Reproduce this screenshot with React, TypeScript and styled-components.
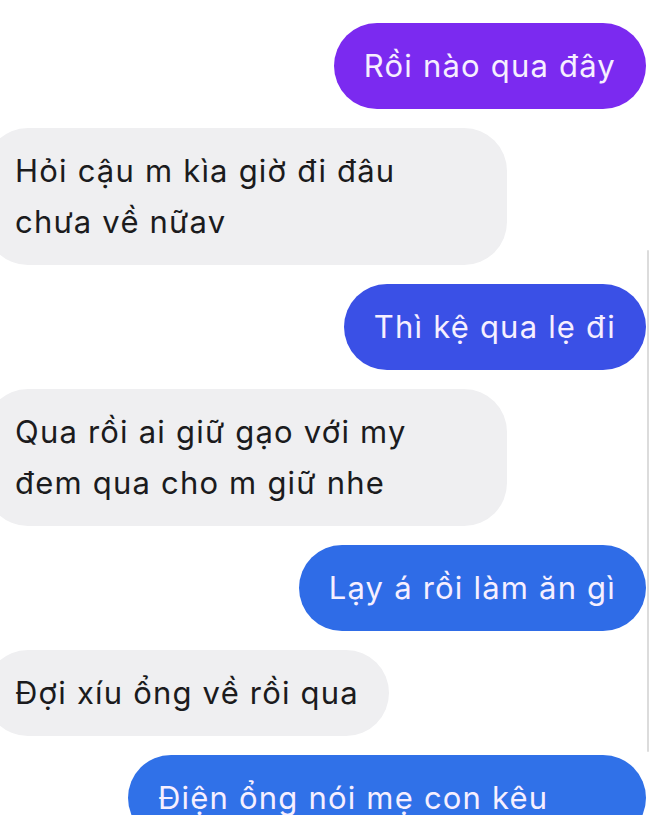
import React from "react";
import styled, { createGlobalStyle } from "styled-components";

const Global = createGlobalStyle`
  html, body { margin: 0; padding: 0; background: #ffffff; }
  body { width: 650px; height: 815px; overflow: hidden; }
  #root { width: 650px; height: 815px; }
`;

const Screen = styled.div`
  position: relative;
  width: 650px;
  height: 815px;
  overflow: hidden;
  background: #ffffff;
  font-family: Inter, "Noto Sans", sans-serif;
`;

const Thread = styled.div`
  display: flex;
  flex-direction: column;
  gap: 19px;
  padding: 23px 4px 0 0;
`;

const Row = styled.div<{ $out?: boolean }>`
  display: flex;
  justify-content: ${(p) => (p.$out ? "flex-end" : "flex-start")};
`;

const Bubble = styled.div<{ $out?: boolean; $bg?: string; $full?: boolean }>`
  box-sizing: border-box;
  max-width: 522px;
  width: ${(p) => (p.$full ? "518px" : "auto")};
  padding: 17px 30px 18px;
  margin-left: ${(p) => (p.$out ? "0" : "-15px")};
  border-radius: 43px;
  background: ${(p) => (p.$out ? p.$bg : "#efeff1")};
  color: ${(p) => (p.$out ? "#f6efff" : "#1b1b1d")};
  font-size: 31px;
  line-height: 51px;
  letter-spacing: 1.2px;
`;

const ScrollThumb = styled.div`
  position: absolute;
  right: 1px;
  top: 250px;
  width: 2px;
  height: 502px;
  background: #dcdcdc;
  border-radius: 1px;
`;

type Msg = { text: string; out?: boolean; bg?: string; full?: boolean };

const messages: Msg[] = [
  { text: "Rồi nào qua đây", out: true, bg: "#7b2af0" },
  { text: "Hỏi cậu m kìa giờ đi đâu chưa về nữav" },
  { text: "Thì kệ qua lẹ đi", out: true, bg: "#3a50e6" },
  { text: "Qua rồi ai giữ gạo với my đem qua cho m giữ nhe" },
  { text: "Lạy á rồi làm ăn gì", out: true, bg: "#2f6ce7" },
  { text: "Đợi xíu ổng về rồi qua" },
  { text: "Điện ổng nói mẹ con kêu", out: true, bg: "#3071e8", full: true },
];

export default function App() {
  return (
    <Screen>
      <Global />
      <Thread>
        {messages.map((m, i) => (
          <Row key={i} $out={m.out}>
            <Bubble $out={m.out} $bg={m.bg} $full={m.full}>
              {m.text}
            </Bubble>
          </Row>
        ))}
      </Thread>
      <ScrollThumb />
    </Screen>
  );
}
